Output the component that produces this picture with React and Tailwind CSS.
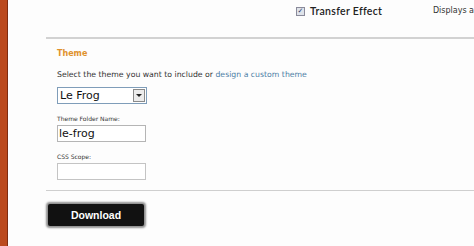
import React from 'react';

const font = { fontFamily: '"DejaVu Sans", Verdana, sans-serif' };
const lato = { fontFamily: 'Lato, "Liberation Sans", sans-serif' };
const arial = { fontFamily: '"Liberation Sans", Arial, sans-serif' };

const App = () => {
    return (
        <div className="flex h-[246px] w-[474px] overflow-hidden bg-[#fdfdfd]" style={font}>
            {/* orange sidebar edge */}
            <div className="w-[8px] shrink-0 bg-[#bb4a1e] border-r border-[#7e2c10]" />

            <div className="flex-1 flex flex-col pl-[38px]">
                {/* top effect row */}
                <div className="h-[37px] flex items-start pt-[6px]">
                    <div className="ml-[250px] flex items-center">
                        <span className="w-[9px] h-[9px] border border-[#8a8a9a] bg-[#dfe3ea] flex items-center justify-center text-[7px] leading-none text-[#2a3a6a]">
                            ✓
                        </span>
                        <span className="ml-[5px] text-[10.5px] font-semibold text-[#222] leading-none tracking-[0.3px]" style={lato}>
                            Transfer Effect
                        </span>
                    </div>
                    <span className="ml-auto mt-[1px] text-[8px] text-[#333] leading-none whitespace-nowrap">Displays a</span>
                </div>

                <div className="h-[2px] bg-[#d2d2d2]" />

                {/* theme section */}
                <div className="pl-[11px] h-[151px] flex flex-col">
                    <h3 className="mt-[11px] text-[8px] font-bold text-[#e0922e] leading-none">Theme</h3>
                    <p className="mt-[13px] text-[7.75px] text-[#333] leading-none whitespace-nowrap">
                        Select the theme you want to include or{' '}
                        <a className="text-[#4f7fa6]">design a custom theme</a>
                    </p>

                    <div className="mt-[8px] w-[90px] h-[17px] border border-[#7f9db9] bg-white flex items-center">
                        <span className="flex-1 pl-[2px] text-[11px] text-[#111] leading-none">Le Frog</span>
                        <span className="w-[12px] h-[13px] mr-[1px] border border-[#8a8a8a] bg-[#ececec] flex items-center justify-center">
                            <span className="w-0 h-0 border-l-[3px] border-r-[3px] border-t-[3px] border-l-transparent border-r-transparent border-t-[#222]" />
                        </span>
                    </div>

                    <label className="mt-[12px] text-[6px] text-[#333] leading-none">Theme Folder Name:</label>
                    <div className="mt-[3px] w-[89px] h-[17px] border border-[#b5b5b5] bg-white flex items-center pl-[1px] text-[11px] text-[#111] leading-none">
                        le-frog
                    </div>

                    <label className="mt-[12px] text-[6px] text-[#333] leading-none">CSS Scope:</label>
                    <div className="mt-[3px] w-[89px] h-[17px] border border-[#c4c4c4] bg-white" />
                </div>

                <div className="h-[1px] bg-[#cfcfcf]" />

                <div className="pt-[11px] pl-[2px]">
                    <button
                        className="w-[96px] h-[22px] bg-[#111] rounded-[2px] shadow-[0_0_2px_2px_#8f8f8f] text-white text-[10.5px] font-bold leading-none"
                        style={arial}
                    >
                        Download
                    </button>
                </div>
            </div>
        </div>
    );
};

export default App;
